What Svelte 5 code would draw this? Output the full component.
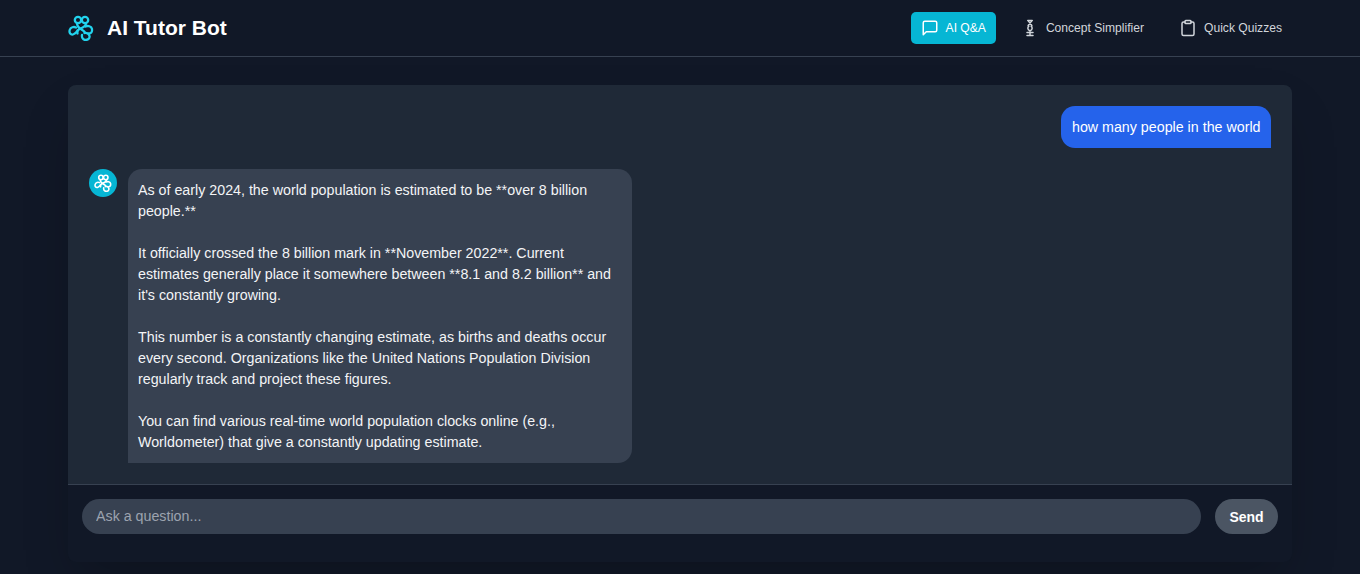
<script>
  const paragraphs = [
    "As of early 2024, the world population is estimated to be **over 8 billion people.**",
    "It officially crossed the 8 billion mark in **November 2022**. Current estimates generally place it somewhere between **8.1 and 8.2 billion** and it's constantly growing.",
    "This number is a constantly changing estimate, as births and deaths occur every second. Organizations like the United Nations Population Division regularly track and project these figures.",
    "You can find various real-time world population clocks online (e.g., Worldometer) that give a constantly updating estimate."
  ];
</script>

{#snippet logo(size)}
  <svg width={size} height={size} viewBox="0 0 26 26" fill="none" stroke="currentColor" stroke-width="2.300" stroke-linecap="round" stroke-linejoin="round">
    <circle cx="10" cy="5" r="3.200" />
    <circle cx="17" cy="5" r="3.200" />
    <path d="M9 8.200c0 3 2 4.800 4.500 6.300s3.500 3 3.500 3.500" />
    <path d="M18 8.200c0 2.800-3 4.300-5.500 5.300s-3.500 3-3 5" />
    <path d="M8 12.500c-2-1-5.500-.5-6.300 2.500s1 5 3.300 4.500 3.500-2.500 4.500-4" />
    <path d="M17.500 11.500c2-1 6-.5 6.500 2.500s-1 4.500-3 4.500" />
    <path d="M14 20c-.5 2.500 1 5 3.500 5s4.500-1.500 4-4-3-3.500-5-3" />
  </svg>
{/snippet}

<div class="page">
  <header class="topbar">
    <div class="brand">
      <span class="brand-icon">{@render logo(26)}</span>
      <h1>AI Tutor Bot</h1>
    </div>
    <nav>
      <button class="tab active">
        <svg width="18" height="18" viewBox="0 0 24 24" fill="none" stroke="currentColor" stroke-width="2" stroke-linecap="round" stroke-linejoin="round"><path d="M21 15a2 2 0 0 1-2 2H7l-4 4V5a2 2 0 0 1 2-2h14a2 2 0 0 1 2 2z" /></svg>
        AI Q&amp;A
      </button>
      <button class="tab">
        <svg width="18" height="18" viewBox="0 0 24 24" fill="none" stroke="currentColor" stroke-width="2" stroke-linecap="round" stroke-linejoin="round"><path d="M9 2h6M9.500 2.500l5 6M14.500 2.500l-5 6M10.500 9.500c-2 1.500-2 5 1.500 6 3.500-1 3.500-4.500 1.500-6M12 15.500V21M8 18h8M8 22h8" /></svg>
        Concept Simplifier
      </button>
      <button class="tab">
        <svg width="18" height="18" viewBox="0 0 24 24" fill="none" stroke="currentColor" stroke-width="2" stroke-linecap="round" stroke-linejoin="round"><path d="M16 4h2a2 2 0 0 1 2 2v14a2 2 0 0 1-2 2H6a2 2 0 0 1-2-2V6a2 2 0 0 1 2-2h2" /><rect x="8" y="2" width="8" height="4" rx="1" /></svg>
        Quick Quizzes
      </button>
    </nav>
  </header>

  <main>
    <section class="chat">
      <div class="messages">
        <div class="user-row">
          <div class="bubble user">how many people in the world</div>
        </div>
        <div class="bot-row">
          <div class="avatar">{@render logo(18)}</div>
          <div class="bubble bot">
            {#each paragraphs as p, i}
              {#if i > 0}<br /><br />{/if}{p}
            {/each}
          </div>
        </div>
      </div>
      <form class="composer" onsubmit={(e) => e.preventDefault()}>
        <input type="text" placeholder="Ask a question..." />
        <button class="send">Send</button>
      </form>
    </section>
  </main>
</div>

<style>
  :global(body) {
    background: #111827;
    font-family: "Liberation Sans", Arial, sans-serif;
    overflow: hidden;
  }

  .page {
    height: 574px;
    display: flex;
    flex-direction: column;
  }

  .topbar {
    height: 56px;
    padding: 0 68px;
    display: flex;
    align-items: center;
    justify-content: space-between;
    border-bottom: 1px solid #374151;
    flex-shrink: 0;
  }

  .brand {
    display: flex;
    align-items: center;
    gap: 13px;
  }

  .brand-icon {
    display: flex;
    color: #22d3ee;
  }

  h1 {
    margin: 0;
    font-size: 21px;
    line-height: 28px;
    font-weight: 700;
    color: #ffffff;
  }

  nav {
    display: flex;
    gap: 15px;
  }

  .tab {
    height: 32px;
    padding: 0 10px;
    display: flex;
    align-items: center;
    gap: 7px;
    border: none;
    border-radius: 5px;
    background: transparent;
    color: #d1d5db;
    font: 12.100px "Liberation Sans", Arial, sans-serif;
  }

  .tab.active {
    background: #06b6d4;
    color: #ffffff;
  }

  main {
    flex: 1;
    padding: 28px 68px 12px;
    min-height: 0;
    display: flex;
  }

  .chat {
    flex: 1;
    display: flex;
    flex-direction: column;
    border-radius: 8px;
    background: #111827;
    box-shadow: 0 25px 50px -12px rgba(0, 0, 0, 0.25);
    overflow: hidden;
  }

  .messages {
    height: 400px;
    flex-shrink: 0;
    padding: 21px;
    box-sizing: border-box;
    background: #1f2937;
    border-bottom: 1px solid #374151;
    display: flex;
    flex-direction: column;
    gap: 21px;
  }

  .user-row {
    display: flex;
    justify-content: flex-end;
  }

  .bot-row {
    display: flex;
    gap: 11px;
    align-items: flex-start;
  }

  .bubble {
    font-size: 14.250px;
    line-height: 21px;
    padding: 10.500px;
    box-sizing: border-box;
  }

  .user {
    background: #2563eb;
    color: #ffffff;
    border-radius: 14px 14px 0 14px;
  }

  .bot {
    width: 504px;
    padding-left: 10px;
    background: #374151;
    color: #f3f4f6;
    border-radius: 14px 14px 14px 0;
  }

  .avatar {
    width: 28px;
    height: 28px;
    border-radius: 50%;
    background: #06b6d4;
    color: #ffffff;
    display: flex;
    align-items: center;
    justify-content: center;
    flex-shrink: 0;
  }

  .composer {
    padding: 14px;
    display: flex;
    gap: 14px;
  }

  input {
    flex: 1;
    height: 35px;
    padding: 0 14px 2px;
    box-sizing: border-box;
    border: none;
    border-radius: 999px;
    background: #374151;
    color: #e5e7eb;
    font: 14.250px "Liberation Sans", Arial, sans-serif;
    outline: none;
  }

  input::placeholder {
    color: #9ca3af;
  }

  .send {
    width: 63px;
    height: 35px;
    border: none;
    border-radius: 999px;
    background: #4b5563;
    color: #ffffff;
    font: 700 14px "Liberation Sans", Arial, sans-serif;
  }
</style>
